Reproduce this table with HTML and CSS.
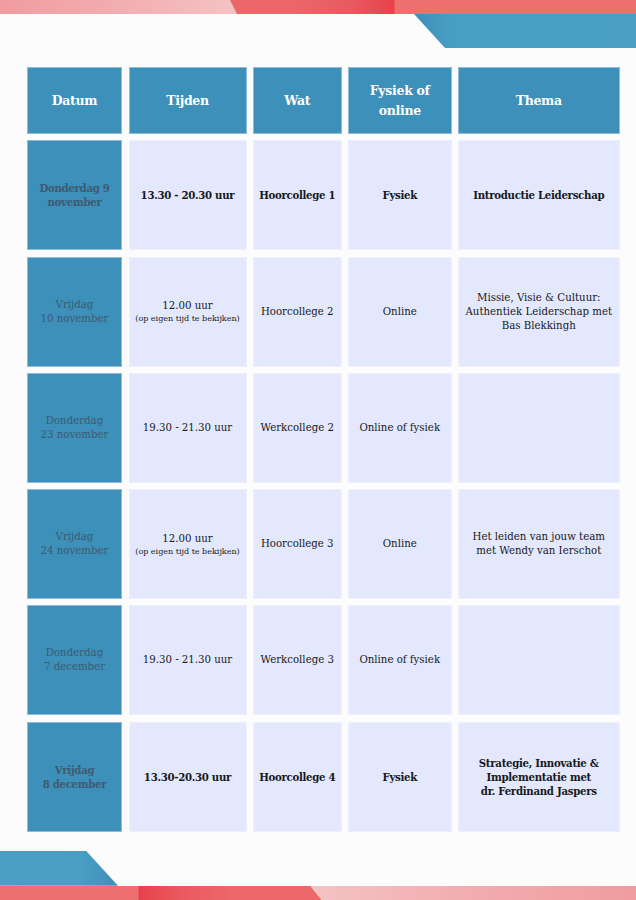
FILE: index.html
```html
<!DOCTYPE html>
<html lang="nl">
<head>
<meta charset="utf-8">
<title>Rooster</title>
<link rel="stylesheet" href="styles.css">
</head>
<body>
<div class="top-band"><div class="top-pink"></div></div>
<div class="top-blue"></div>

<div class="schedule">
  <div class="cell head">Datum</div>
  <div class="cell head">Tijden</div>
  <div class="cell head">Wat</div>
  <div class="cell head">Fysiek of<br>online</div>
  <div class="cell head">Thema</div>

  <div class="cell date bold">Donderdag 9<br>november</div>
  <div class="cell bold">13.30 - 20.30 uur</div>
  <div class="cell bold">Hoorcollege 1</div>
  <div class="cell bold">Fysiek</div>
  <div class="cell bold">Introductie Leiderschap</div>

  <div class="cell date">Vrijdag<br>10 november</div>
  <div class="cell"><span>12.00 uur</span><span class="small">(op eigen tijd te bekijken)</span></div>
  <div class="cell">Hoorcollege 2</div>
  <div class="cell">Online</div>
  <div class="cell">Missie, Visie &amp; Cultuur:<br>Authentiek Leiderschap met<br>Bas Blekkingh</div>

  <div class="cell date">Donderdag<br>23 november</div>
  <div class="cell">19.30 - 21.30 uur</div>
  <div class="cell">Werkcollege 2</div>
  <div class="cell">Online of fysiek</div>
  <div class="cell"></div>

  <div class="cell date">Vrijdag<br>24 november</div>
  <div class="cell"><span>12.00 uur</span><span class="small">(op eigen tijd te bekijken)</span></div>
  <div class="cell">Hoorcollege 3</div>
  <div class="cell">Online</div>
  <div class="cell">Het leiden van jouw team<br>met Wendy van Ierschot</div>

  <div class="cell date">Donderdag<br>7 december</div>
  <div class="cell">19.30 - 21.30 uur</div>
  <div class="cell">Werkcollege 3</div>
  <div class="cell">Online of fysiek</div>
  <div class="cell"></div>

  <div class="cell date bold">Vrijdag<br>8 december</div>
  <div class="cell bold">13.30-20.30 uur</div>
  <div class="cell bold">Hoorcollege 4</div>
  <div class="cell bold">Fysiek</div>
  <div class="cell bold">Strategie, Innovatie &amp;<br>Implementatie met<br>dr. Ferdinand Jaspers</div>
</div>

<div class="bottom-blue"></div>
<div class="bottom-band"><div class="bottom-pink"></div></div>
</body>
</html>
```
FILE: styles.css
```css
html, body {
  margin: 0;
  padding: 0;
}
body {
  width: 636px;
  height: 900px;
  overflow: hidden;
  background: #fcfcfd;
  font-family: "DejaVu Serif", "Liberation Serif", serif;
  color: #16191d;
}

.top-band {
  height: 14px;
  background: linear-gradient(to right, #ec6a6b 0, #ea6668 300px, #e95a60 350px, #e8414b 394px, #ee6f6f 395px, #ee6f6f 100%);
}
.top-pink {
  width: 237px;
  height: 14px;
  background: linear-gradient(to right, #f09c9e 0, #f2aeb0 120px, #f5c3c4 237px);
  clip-path: polygon(0 0, 230px 0, 237px 100%, 0 100%);
}
.top-blue {
  width: 222px;
  height: 34px;
  margin-left: auto;
  background: linear-gradient(to right, #3f8fb8 0, #489fc6 40px, #499fc6 100%);
  clip-path: polygon(0 0, 100% 0, 100% 100%, 31px 100%);
}

.schedule {
  display: grid;
  grid-template-columns: 95px 118px 88.5px 103.5px 161.5px;
  grid-template-rows: 67px repeat(6, 110px);
  column-gap: 6.5px;
  row-gap: 6.3px;
  margin: 19px 0 0 27px;
}
.cell {
  box-sizing: border-box;
  background: #e4e8fc;
  border: 1px solid #eef0fd;
  display: flex;
  flex-direction: column;
  align-items: center;
  justify-content: center;
  text-align: center;
  font-size: 10.2px;
  line-height: 14px;
  padding: 0 2px;
  white-space: nowrap;
}
.cell.head {
  background: #3c90ba;
  border-color: #8fbcd6;
  color: #ffffff;
  font-weight: bold;
  font-size: 12.5px;
  line-height: 19.5px;
  letter-spacing: -0.3px;
}
.cell.date {
  background: #3c90ba;
  border-color: #8fbcd6;
  color: #3f5a70;
}
.cell.bold {
  font-weight: bold;
  letter-spacing: -0.3px;
}
.cell .small {
  font-size: 8px;
  line-height: 11px;
}

.bottom-blue {
  width: 118px;
  height: 35px;
  margin-top: 19px;
  background: linear-gradient(to right, #499fc6 0, #489ec5 80px, #3f8fb8 118px);
  clip-path: polygon(0 0, 86px 0, 100% 100%, 0 100%);
}
.bottom-band {
  height: 15px;
  background: linear-gradient(to right, #ee6f6f 0, #ee6f6f 138px, #e8414b 139px, #ea5a60 180px, #ec686a 230px, #ea6668 100%);
}
.bottom-pink {
  width: 326px;
  height: 15px;
  margin-left: auto;
  background: linear-gradient(to right, #f5c3c4 0, #f2aeb0 150px, #f09c9e 326px);
  clip-path: polygon(0 0, 100% 0, 100% 100%, 12px 100%);
}
```
